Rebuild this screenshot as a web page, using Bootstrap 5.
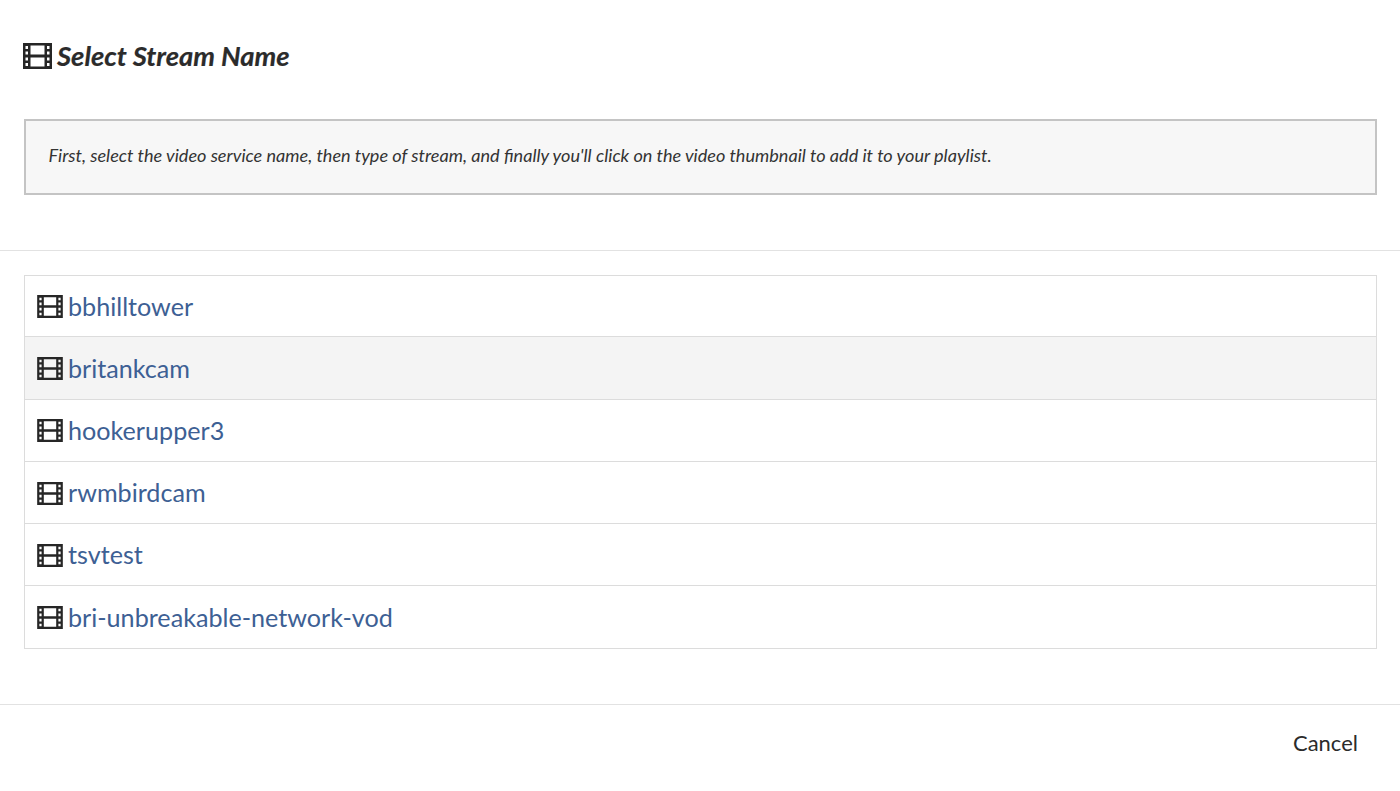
<!DOCTYPE html>
<html lang="en">
<head>
<meta charset="utf-8">
<title>Select Stream Name</title>
<link rel="stylesheet" href="https://cdn.jsdelivr.net/npm/bootstrap@5.3.0/dist/css/bootstrap.min.css">
<style>
body { font-family: Lato, "Liberation Sans", sans-serif; color: #2b2b2b; background: #fff; height: 791px; overflow: hidden; }
.head-zone { padding: 38px 23px 0 23.5px; height: 251px; border-bottom: 1px solid #e2e2e2; }
.title-line { font-size: 27.4px; line-height: 36px; font-weight: 700; font-style: italic; margin: 0 0 45px -.5px; display: flex; align-items: center; gap: 5px; color: #2b2b2b; -webkit-text-stroke: .2px #2b2b2b; }
.title-line svg { width: 29px; height: 26px; flex: none; }
.note-box { height: 76px; border: 2px solid #c4c4c4; background: #f7f7f7; padding: 0 23px 2px; display: flex; align-items: center; font-size: 18.1px; font-style: italic; color: #333; }
.note-box p { margin: 0; }
.list-zone { padding: 24px 23px 0 24px; height: 454px; border-bottom: 1px solid #e2e2e2; }
.stream-list { border-radius: 0; }
.stream-list .list-group-item { height: 62.3px; padding: 1px 12px 0; border-color: #dcdcdc; display: flex; align-items: center; gap: 5px; font-size: 25.15px; }
.stream-list .list-group-item.is-hover { background: #f4f4f4; }
.stream-list svg { width: 26px; height: 23px; flex: none; }
.stream-list a { color: #3d6094; text-decoration: none; }
.foot-zone { padding: 21px 42px 0 0; display: flex; justify-content: flex-end; }
.cancel-btn { font-size: 22px; line-height: 34px; color: #2b2b2b; padding: 0; border: 0; background: none; }
</style>
</head>
<body>
<svg class="d-none" xmlns="http://www.w3.org/2000/svg">
<symbol id="film" viewBox="0 0 29 26">
<path fill="#262626" fill-rule="evenodd" d="M0 0h29v26H0zM2.5 3v3h2.500V3zM2.500 8.500v3h2.500v-3zM2.500 14.500v3h2.500v-3zM2.500 20v3h2.500v-3zM24 3v3h2.500V3zM24 8.500v3h2.500v-3zM24 14.500v3h2.500v-3zM24 20v3h2.500v-3zM7.500 2.500v9h14v-9zM7.500 14.500v9h14v-9z"/>
</symbol>
</svg>
<section class="head-zone">
<h1 class="title-line"><svg><use href="#film"/></svg><span>Select Stream Name</span></h1>
<div class="note-box"><p>First, select the video service name, then type of stream, and finally you'll click on the video thumbnail to add it to your playlist.</p></div>
</section>
<section class="list-zone">
<div class="list-group stream-list">
<div class="list-group-item"><svg><use href="#film"/></svg><a href="#">bbhilltower</a></div>
<div class="list-group-item is-hover"><svg><use href="#film"/></svg><a href="#">britankcam</a></div>
<div class="list-group-item"><svg><use href="#film"/></svg><a href="#">hookerupper3</a></div>
<div class="list-group-item"><svg><use href="#film"/></svg><a href="#">rwmbirdcam</a></div>
<div class="list-group-item"><svg><use href="#film"/></svg><a href="#">tsvtest</a></div>
<div class="list-group-item"><svg><use href="#film"/></svg><a href="#">bri-unbreakable-network-vod</a></div>
</div>
</section>
<footer class="foot-zone"><button type="button" class="btn cancel-btn">Cancel</button></footer>
<script src="https://cdn.jsdelivr.net/npm/bootstrap@5.3.0/dist/js/bootstrap.bundle.min.js"></script>
</body>
</html>
